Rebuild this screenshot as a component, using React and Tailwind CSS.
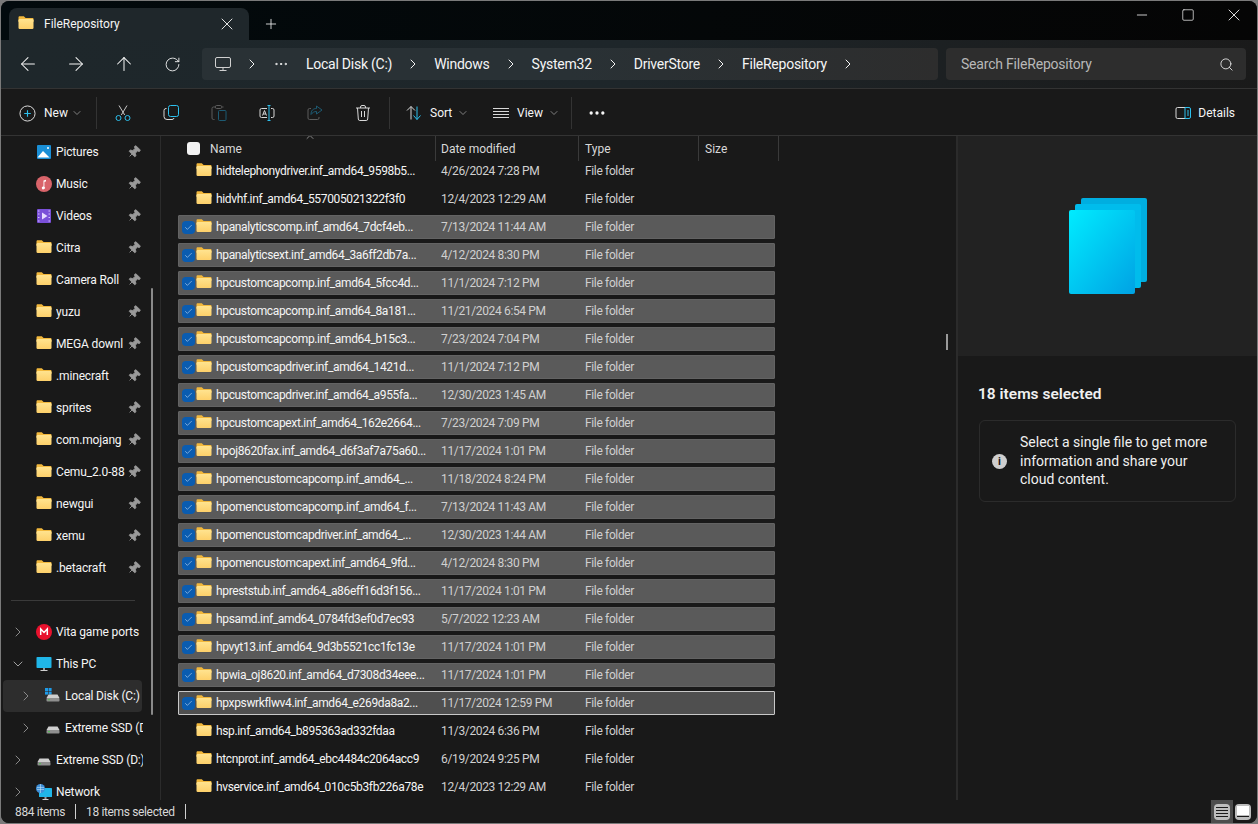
import { ArrowLeft, ArrowRight, ArrowUp, RotateCw, ChevronRight, ChevronDown, ChevronUp, Search, X, Plus, Minus, Square, Ellipsis, Check, Pin } from 'lucide-react';

const pinned = [
  ['Pictures', 'pictures'],
  ['Music', 'music'],
  ['Videos', 'videos'],
  ['Citra', 'folder'],
  ['Camera Roll', 'folder'],
  ['yuzu', 'folder'],
  ['MEGA downl', 'folder'],
  ['.minecraft', 'folder'],
  ['sprites', 'folder'],
  ['com.mojang', 'folder'],
  ['Cemu_2.0-88', 'folder'],
  ['newgui', 'folder'],
  ['xemu', 'folder'],
  ['.betacraft', 'folder'],
];

const files = [
  ['hidtelephonydriver.inf_amd64_9598b5...', '4/26/2024 7:28 PM', 0],
  ['hidvhf.inf_amd64_557005021322f3f0', '12/4/2023 12:29 AM', 0],
  ['hpanalyticscomp.inf_amd64_7dcf4eb...', '7/13/2024 11:44 AM', 1],
  ['hpanalyticsext.inf_amd64_3a6ff2db7a...', '4/12/2024 8:30 PM', 1],
  ['hpcustomcapcomp.inf_amd64_5fcc4d...', '11/1/2024 7:12 PM', 1],
  ['hpcustomcapcomp.inf_amd64_8a181...', '11/21/2024 6:54 PM', 1],
  ['hpcustomcapcomp.inf_amd64_b15c3...', '7/23/2024 7:04 PM', 1],
  ['hpcustomcapdriver.inf_amd64_1421d...', '11/1/2024 7:12 PM', 1],
  ['hpcustomcapdriver.inf_amd64_a955fa...', '12/30/2023 1:45 AM', 1],
  ['hpcustomcapext.inf_amd64_162e2664...', '7/23/2024 7:09 PM', 1],
  ['hpoj8620fax.inf_amd64_d6f3af7a75a60...', '11/17/2024 1:01 PM', 1],
  ['hpomencustomcapcomp.inf_amd64_...', '11/18/2024 8:24 PM', 1],
  ['hpomencustomcapcomp.inf_amd64_f...', '7/13/2024 11:43 AM', 1],
  ['hpomencustomcapdriver.inf_amd64_...', '12/30/2023 1:44 AM', 1],
  ['hpomencustomcapext.inf_amd64_9fd...', '4/12/2024 8:30 PM', 1],
  ['hpreststub.inf_amd64_a86eff16d3f156...', '11/17/2024 1:01 PM', 1],
  ['hpsamd.inf_amd64_0784fd3ef0d7ec93', '5/7/2022 12:23 AM', 1],
  ['hpvyt13.inf_amd64_9d3b5521cc1fc13e', '11/17/2024 1:01 PM', 1],
  ['hpwia_oj8620.inf_amd64_d7308d34eee...', '11/17/2024 1:01 PM', 1],
  ['hpxpswrkflwv4.inf_amd64_e269da8a2...', '11/17/2024 12:59 PM', 2],
  ['hsp.inf_amd64_b895363ad332fdaa', '11/3/2024 6:36 PM', 0],
  ['htcnprot.inf_amd64_ebc4484c2064acc9', '6/19/2024 9:25 PM', 0],
  ['hvservice.inf_amd64_010c5b3fb226a78e', '12/4/2023 12:29 AM', 0],
];

function FolderIcon({ className = 'h-4 w-4' }) {
  return (
    <svg viewBox="0 0 16 16" className={`${className} shrink-0`}>
      <path d="M0.500 1.500C0.500 .8 1 .3 1.700 .3h3.600c.4 0 .7.100 1 .4L7.600 2h6.900c.6 0 1 .4 1 1V6H.5z" fill="#f2b83c" />
      <defs>
        <linearGradient id="folderFront" x1="0" y1="0" x2="0" y2="1">
          <stop offset="0" stopColor="#ffe38f" />
          <stop offset="1" stopColor="#fdd06a" />
        </linearGradient>
      </defs>
      <rect x="0.500" y="3" width="15" height="10" rx="1.200" fill="url(#folderFront)" />
    </svg>
  );
}

function DriveIcon({ win }) {
  return (
    <svg viewBox="0 0 16 16" className="h-4 w-4 shrink-0">
      {win ? (
        <g fill="#1e9be8">
          <rect x="0" y="0" width="3" height="3" />
          <rect x="3.600" y="0" width="3" height="3" />
          <rect x="0" y="3.600" width="3" height="3" />
          <rect x="3.600" y="3.600" width="3" height="3" />
        </g>
      ) : null}
      <path d="M3.500 6.500h9l2 3.500h-13z" fill="#cfcfcf" />
      <rect x="1.500" y="10" width="13" height="3.500" rx="0.700" fill="#8f8f8f" />
      <rect x="3" y="11.200" width="2" height="1" fill="#4fc04f" />
    </svg>
  );
}

function NavIcon({ type }) {
  if (type === 'folder') return <FolderIcon />;
  if (type === 'pictures')
    return (
      <svg viewBox="0 0 16 16" className="h-4 w-4 shrink-0">
        <rect x="1" y="1" width="14" height="14" rx="1" fill="#1a8fd6" />
        <path d="M1.500 13.500 7 7l6.500 6.500z" fill="#ffffff" />
        <circle cx="12" cy="4" r="1" fill="#ffffff" />
      </svg>
    );
  if (type === 'music')
    return (
      <svg viewBox="0 0 16 16" className="h-4 w-4 shrink-0">
        <circle cx="8" cy="8" r="8" fill="#d9646a" />
        <path d="M7.500 10.500V4.500l2.500-.7v1.600l-1.600.4v5a1.600 1.400 0 1 1-.9-.3z" fill="#ffffff" />
      </svg>
    );
  if (type === 'videos')
    return (
      <svg viewBox="0 0 16 16" className="h-4 w-4 shrink-0">
        <rect x="1" y="1" width="14" height="14" rx="1" fill="#7a50d8" />
        <path d="M6 4.500v7l5.500-3.500z" fill="#e8dcff" />
        <path d="M2.200 3h1.200M2.200 6h1.200M2.200 9.500h1.200M2.200 13h1.200M12.600 3h1.200M12.600 6h1.200M12.600 9.500h1.200M12.600 13h1.200" stroke="#e8dcff" />
      </svg>
    );
  if (type === 'mega')
    return (
      <svg viewBox="0 0 16 16" className="h-4 w-4 shrink-0">
        <circle cx="8" cy="8" r="8" fill="#e8112d" />
        <path d="M4.700 11V5l3.300 3.500L11.300 5v6" fill="none" stroke="#ffffff" strokeWidth="1.500" />
      </svg>
    );
  if (type === 'pc')
    return (
      <svg viewBox="0 0 16 16" className="h-4 w-4 shrink-0">
        <rect x="0.500" y="1" width="15" height="11" rx="0.800" fill="#20b6e8" />
        <rect x="7" y="12" width="2" height="2" fill="#9a9a9a" />
        <rect x="4.500" y="14" width="7" height="1" fill="#d0d0d0" />
      </svg>
    );
  if (type === 'drive') return <DriveIcon />;
  if (type === 'win') return <DriveIcon win />;
  return (
    <svg viewBox="0 0 16 16" className="h-4 w-4 shrink-0">
      <rect x="3" y="4" width="13" height="9" rx="0.600" fill="#20b6e8" />
      <rect x="8.500" y="13" width="2" height="2" fill="#9a9a9a" />
      <rect x="6.500" y="15" width="6" height="1" fill="#d0d0d0" />
      <circle cx="4.500" cy="4.500" r="4.500" fill="#3f8fd8" />
      <path d="M1 3.500h7M1 5.500h7M4.500 0v9" stroke="#bfe0f7" strokeWidth="0.600" />
    </svg>
  );
}

function PinnedRow({ name, icon }) {
  return (
    <div className="flex h-8 items-center pl-[35px] text-xs tracking-[-0.15px] text-[#f5f5f5]">
      <NavIcon type={icon} />
      <span className="ml-[4px] w-[71px] overflow-hidden whitespace-nowrap">{name}</span>
      <Pin className="h-[14px] w-[14px] rotate-45 fill-[#9a9a9a] text-[#9a9a9a]" strokeWidth={1.5} />
    </div>
  );
}

function TreeRow({ name, icon, nested, open, active }) {
  return (
    <div className={`flex h-8 items-center overflow-hidden text-xs tracking-[-0.15px] text-[#f5f5f5] ${active ? 'mx-[2px] w-[139px] rounded bg-[#2d2d2d]' : 'w-[142px]'}`}>
      <div className={`flex shrink-0 items-center ${nested ? (active ? 'w-[42px] pl-[15px]' : 'w-[44px] pl-[17px]') : 'w-[35px] pl-[9px]'}`}>
        {open ? (
          <ChevronDown className="h-4 w-4 text-[#a0a0a0]" strokeWidth={1.5} />
        ) : (
          <ChevronRight className="h-4 w-4 text-[#8a8a8a]" strokeWidth={1.5} />
        )}
      </div>
      <NavIcon type={icon} />
      <span className="ml-[4px] whitespace-nowrap">{name}</span>
    </div>
  );
}

function Sidebar() {
  return (
    <aside className="relative w-[160px] shrink-0 overflow-hidden border-r border-[#2b2b2b]">
      {pinned.map(([name, icon]) => (
        <PinnedRow key={name} name={name} icon={icon} />
      ))}
      <div className="mx-[10px] mb-[15px] mt-4 h-px w-[124px] bg-[#3a3a3a]" />
      <TreeRow name="Vita game ports" icon="mega" />
      <TreeRow name="This PC" icon="pc" open />
      <TreeRow name="Local Disk (C:)" icon="win" nested active />
      <TreeRow name="Extreme SSD (D:)" icon="drive" nested />
      <TreeRow name="Extreme SSD (D:)" icon="drive" />
      <TreeRow name="Network" icon="network" />
      <div className="absolute left-[150px] top-[152px] h-[427px] w-[2px] rounded bg-[#8a8a8a]" />
    </aside>
  );
}

function Row({ name, date, sel }) {
  const box = sel === 2 ? 'border border-[#c8c8c8] bg-[#4f4f4f]' : sel === 1 ? 'border border-[#636363] bg-[#5a5a5a]' : 'border border-transparent';
  return (
    <div className={`mb-1 ml-[17px] flex h-6 w-[597px] items-center rounded-[1px] text-xs tracking-[-0.35px] text-[#f5f5f5] ${box}`}>
      <div className="flex w-[17px] shrink-0 justify-center pl-[1px]">
        {sel ? (
          <div className="flex h-[13px] w-[13px] items-center justify-center rounded-sm bg-[#0a5cb0]">
            <Check className="h-[9px] w-[9px] text-[#cfe3f7]" strokeWidth={1.5} />
          </div>
        ) : null}
      </div>
      <FolderIcon />
      <span className="ml-[4px] w-[225px] shrink-0 whitespace-nowrap">{name}</span>
      <span className="w-[144px] shrink-0 whitespace-nowrap text-[#d0d0d0]">{date}</span>
      <span className="whitespace-nowrap text-[#d0d0d0]">File folder</span>
    </div>
  );
}

function FileList() {
  return (
    <main className="relative w-[795px] shrink-0 overflow-hidden">
      <div className="relative flex h-[23px] items-start text-xs text-[#d8d8d8]">
        <div className="flex h-[25px] w-[274px] items-center pl-[26px]">
          <div className="h-[13px] w-[13px] rounded-[3px] bg-[#f2f2f2]" />
          <span className="ml-[10px]">Name</span>
        </div>
        <div className="flex h-[25px] w-[143px] items-center border-l border-[#3a3a3a] pl-[5px]">Date modified</div>
        <div className="flex h-[25px] w-[120px] items-center border-l border-[#3a3a3a] pl-[6px]">Type</div>
        <div className="flex h-[25px] w-[81px] items-center border-x border-[#3a3a3a] pl-[6px]">Size</div>
        <ChevronUp className="absolute left-[143px] top-[-5px] h-[12px] w-[12px] text-[#b0b0b0]" strokeWidth={1.5} />
      </div>
      {files.map(([name, date, sel]) => (
        <Row key={name} name={name} date={date} sel={sel} />
      ))}
      <div className="absolute left-[785px] top-[198px] h-[16px] w-[2px] bg-[#9a9a9a]" />
    </main>
  );
}

function DetailsPane() {
  return (
    <section className="flex-1 border-l-2 border-[#2b2b2b]">
      <div className="flex h-[220px] items-start justify-center bg-[#222222] pt-[62px]">
        <svg viewBox="0 0 78 96" className="h-[96px] w-[78px]">
          <rect x="12" y="0" width="66" height="84" rx="2" fill="#00aee0" />
          <rect x="6" y="6" width="66" height="84" rx="2" fill="#00bcec" />
          <defs>
            <linearGradient id="sheet" x1="0" y1="0" x2="1" y2="1">
              <stop offset="0" stopColor="#00ecff" />
              <stop offset="1" stopColor="#00a2e4" />
            </linearGradient>
          </defs>
          <rect x="0" y="12" width="66" height="84" rx="2" fill="url(#sheet)" />
        </svg>
      </div>
      <div className="px-5 pt-[27px]">
        <h2 className="text-[15.5px] font-semibold leading-[22px] text-[#f0f0f0]">18 items selected</h2>
        <div className="ml-px mt-[15px] flex h-[82px] w-[257px] items-center rounded-md border border-[#2b2b2b] pl-[12px]">
          <div className="flex h-[15px] w-[15px] shrink-0 items-center justify-center rounded-full bg-[#cfcfcf] text-[11px] font-bold leading-none text-[#1a1a1a]">i</div>
          <p className="ml-[13px] w-[200px] text-sm leading-[18.5px] text-[#f0f0f0]">Select a single file to get more information and share your cloud content.</p>
        </div>
      </div>
    </section>
  );
}

function Divider() {
  return <div className="h-[32px] w-px bg-[#333333]" />;
}

export default function App() {
  return (
    <div className="h-[824px] w-[1258px] overflow-hidden bg-[#7a7a7a] p-px" style={{ fontFamily: 'Roboto, "Open Sans", sans-serif' }}>
      <div className="flex h-full flex-col overflow-hidden rounded-lg bg-[#191919] text-[#f5f5f5]">
        {/* tab strip */}
        <div className="flex h-[39px] shrink-0 items-end bg-gradient-to-r from-[#020a0d] to-[#050505] pl-2">
          <div className="flex h-8 w-[240px] items-center rounded-t-lg bg-[#1f272b] pl-[9px] text-xs">
            <FolderIcon />
            <span className="ml-[10px]">FileRepository</span>
            <X className="ml-auto mr-[12px] h-5 w-5" strokeWidth={1.1} />
          </div>
          <Plus className="mb-[8px] ml-[14px] h-4 w-4" strokeWidth={1.25} />
          <div className="ml-auto flex h-full items-start text-[#f0f0f0]">
            <div className="flex w-[46px] justify-center pt-[6px]"><Minus className="h-4 w-4" strokeWidth={1.25} /></div>
            <div className="flex w-[46px] justify-center pt-[7px]"><Square className="h-[14px] w-[14px]" strokeWidth={1.25} /></div>
            <div className="flex w-[46px] justify-center pt-[4px]"><X className="h-5 w-5" strokeWidth={1.1} /></div>
          </div>
        </div>

        {/* address row */}
        <div className="flex h-[49px] shrink-0 items-center border-b border-[#333333] bg-gradient-to-r from-[#1e272b] via-[#1e262a] to-[#1a1a1a] pl-[3px] pr-[11px]">
          <div className="flex w-[48px] justify-center"><ArrowLeft className="h-[22px] w-[22px]" strokeWidth={1.1} /></div>
          <div className="flex w-[48px] justify-center"><ArrowRight className="h-[22px] w-[22px]" strokeWidth={1.1} /></div>
          <div className="flex w-[48px] justify-center"><ArrowUp className="h-[22px] w-[22px]" strokeWidth={1.1} /></div>
          <div className="flex w-[48px] justify-center"><RotateCw className="h-[17px] w-[17px]" strokeWidth={1.25} /></div>
          <div className="ml-[6px] flex h-8 flex-1 items-center gap-[13px] rounded bg-gradient-to-r from-[#293135] via-[#293135] to-[#2d2d2d] pl-[13px] text-sm tracking-[-0.25px]">
            <svg viewBox="0 0 16 16" className="h-4 w-4 text-[#d0d0d0]" fill="none" stroke="currentColor" strokeWidth="1">
              <rect x="0.500" y="1.500" width="15" height="10" rx="1.500" />
              <path d="M8 11.500v2.500M4.500 14.500h7" />
            </svg>
            <ChevronRight className="h-4 w-4" strokeWidth={1.5} />
            <Ellipsis className="mr-[4px] h-4 w-4" strokeWidth={1.5} />
            {['Local Disk (C:)', 'Windows', 'System32', 'DriverStore', 'FileRepository'].map((crumb) => (
              <div key={crumb} className="flex items-center gap-[13px]">
                <span className="whitespace-nowrap">{crumb}</span>
                <ChevronRight className="h-4 w-4" strokeWidth={1.5} />
              </div>
            ))}
          </div>
          <div className="ml-2 flex h-8 w-[300px] items-center justify-between rounded bg-[#2d2d2d] pl-[15px] pr-[12px] text-sm tracking-[-0.2px] text-[#b8b8b8]">
            <span>Search FileRepository</span>
            <Search className="h-[15px] w-[15px] text-[#e0e0e0]" strokeWidth={1.5} />
          </div>
        </div>

        {/* command bar */}
        <div className="flex h-[47px] shrink-0 items-center border-b border-[#333333] bg-[#191919] pl-[18px] pr-[22px] pt-[2px] text-xs">
          <div className="flex w-[77px] items-center">
            <svg viewBox="0 0 18 18" className="h-[17px] w-[17px]" fill="none">
              <circle cx="9" cy="9" r="8" stroke="#e8e8e8" />
              <path d="M9 5.500v7M5.500 9h7" stroke="#2cc0ee" strokeWidth="1.200" />
            </svg>
            <span className="ml-[8px]">New</span>
            <ChevronDown className="ml-[3px] h-[12px] w-[12px] text-[#a0a0a0]" strokeWidth={1.5} />
          </div>
          <Divider />
          <div className="ml-[2px] flex w-[48px] justify-center">
            <svg viewBox="0 0 16 16" className="h-4 w-4" fill="none">
              <path d="M4 0.500 9.700 10M12 0.500 6.300 10" stroke="#c8c8c8" />
              <circle cx="3.500" cy="13" r="2.500" stroke="#2cc0ee" />
              <circle cx="12.500" cy="13" r="2.500" stroke="#2cc0ee" />
            </svg>
          </div>
          <div className="flex w-[48px] justify-center">
            <svg viewBox="0 0 16 16" className="h-4 w-4" fill="none">
              <rect x="5.500" y="0.500" width="10" height="11" rx="2" stroke="#2cc0ee" />
              <path d="M3.500 3.500h-.5a2 2 0 0 0-2 2v6a3 3 0 0 0 3 3h5a2 2 0 0 0 2-1.500" stroke="#d8d8d8" />
            </svg>
          </div>
          <div className="flex w-[48px] justify-center">
            <svg viewBox="0 0 16 16" className="h-4 w-4" fill="none">
              <path d="M3.500 14.500h-1a1.500 1.500 0 0 1-1.500-1.500V3.500A1.500 1.500 0 0 1 2.500 2H5M11 2h1.500" stroke="#5c5c5c" />
              <rect x="4.500" y="0.500" width="6" height="3" rx="1" stroke="#5c5c5c" />
              <rect x="7.500" y="5.500" width="7.500" height="10" rx="1" stroke="#1d5a72" />
            </svg>
          </div>
          <div className="flex w-[48px] justify-center">
            <svg viewBox="0 0 16 16" className="h-4 w-4" fill="none">
              <path d="M8 3.500H2.500A1.500 1.500 0 0 0 1 5v6a1.500 1.500 0 0 0 1.500 1.500H8M12 3.500h1.500A1.500 1.500 0 0 1 15 5v6a1.500 1.500 0 0 1-1.500 1.500H12" stroke="#d8d8d8" />
              <path d="M10 1v14M8.500 .5h3M8.500 15.500h3" stroke="#2cc0ee" />
              <path d="M3.500 10.500 5.500 5.500l2 5M4.200 9h2.600" stroke="#d8d8d8" />
            </svg>
          </div>
          <div className="flex w-[48px] justify-center">
            <svg viewBox="0 0 16 16" className="h-4 w-4" fill="none">
              <path d="M4 3.500H2.500A1.500 1.500 0 0 0 1 5v8a1.500 1.500 0 0 0 1.500 1.500h8A1.500 1.500 0 0 0 12 13v-1" stroke="#5c5c5c" />
              <path d="M9.500 1v2.500C6 3.500 4 5.500 4 9.500c1.500-2 3-3 5.500-3V9L15 5z" stroke="#1d5a72" />
            </svg>
          </div>
          <div className="flex w-[48px] justify-center">
            <svg viewBox="0 0 16 16" className="h-4 w-4" fill="none" stroke="#d8d8d8">
              <path d="M1 3h14M5.500 3V2a1.500 1.500 0 0 1 1.500-1.500h2A1.500 1.500 0 0 1 10.500 2v1" />
              <path d="M2.500 3l.8 11a1.500 1.500 0 0 0 1.500 1.500h6.400a1.500 1.500 0 0 0 1.500-1.500l.8-11" />
              <path d="M6.500 6v6M9.500 6v6" />
            </svg>
          </div>
          <div className="ml-[2px]"><Divider /></div>
          <div className="flex w-[90px] items-center pl-[16px]">
            <svg viewBox="0 0 16 16" className="h-4 w-4" fill="none">
              <path d="M5 14.500V1.500M1 5.500l4-4 4 4" stroke="#d8d8d8" />
              <path d="M11 1.500v13M7.500 10.500l3.500 4 3.500-4" stroke="#2cc0ee" />
            </svg>
            <span className="ml-[8px]">Sort</span>
            <ChevronDown className="ml-[5px] h-[12px] w-[12px] text-[#a0a0a0]" strokeWidth={1.5} />
          </div>
          <div className="flex w-[91px] items-center pl-[13px]">
            <svg viewBox="0 0 16 16" className="h-4 w-4" fill="none" stroke="#d8d8d8">
              <path d="M0 3.500h16M0 6.500h16M0 9.500h16M0 12.500h16" />
            </svg>
            <span className="ml-[8px]">View</span>
            <ChevronDown className="ml-[5px] h-[12px] w-[12px] text-[#a0a0a0]" strokeWidth={1.5} />
          </div>
          <Divider />
          <div className="flex w-[50px] justify-center"><Ellipsis className="h-5 w-5" strokeWidth={2} /></div>
          <div className="ml-auto flex items-center">
            <svg viewBox="0 0 16 14" className="h-[14px] w-4" fill="none">
              <path d="M10 1.500H2.500A1.500 1.500 0 0 0 1 3v8a1.500 1.500 0 0 0 1.500 1.500H10" stroke="#d8d8d8" />
              <path d="M10 1.500h4a1.500 1.500 0 0 1 1.500 1.500v8a1.500 1.500 0 0 1-1.500 1.500h-4zM12 5h2M12 7h2M12 9h2" stroke="#2cc0ee" />
            </svg>
            <span className="ml-[7px]">Details</span>
          </div>
        </div>

        {/* body */}
        <div className="flex min-h-0 flex-1 overflow-hidden">
          <Sidebar />
          <FileList />
          <DetailsPane />
        </div>

        {/* status bar */}
        <div className="flex h-[23px] shrink-0 items-center bg-[#191919] pl-[14px] text-xs tracking-[-0.35px] text-[#d8d8d8]">
          <span>884 items</span>
          <span className="mx-[10px] h-[15px] w-px bg-[#d0d0d0]" />
          <span>18 items selected</span>
          <span className="ml-[10px] h-[15px] w-px bg-[#d0d0d0]" />
          <div className="ml-auto mr-[6px] flex items-center gap-[2px]">
            <div className="flex h-[23px] w-[22px] items-center justify-center bg-[#4d4d4d]">
              <div className="flex h-[16px] w-[16px] flex-col justify-center gap-[2px] rounded-sm bg-[#bdbdbd] px-[2px]">
                <div className="h-px bg-[#1a1a1a]" />
                <div className="h-px bg-[#1a1a1a]" />
                <div className="h-px bg-[#1a1a1a]" />
                <div className="h-px bg-[#1a1a1a]" />
              </div>
            </div>
            <div className="flex h-[16px] w-[16px] flex-col rounded-sm bg-[#bdbdbd] p-[2px]">
              <div className="h-[9px] bg-white" />
              <div className="mt-px h-px bg-[#1a1a1a]" />
            </div>
          </div>
        </div>
      </div>
    </div>
  );
}
